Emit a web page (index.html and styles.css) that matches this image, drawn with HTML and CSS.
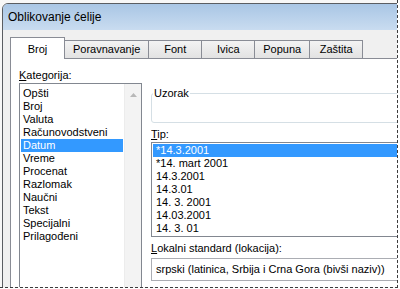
FILE: index.html
```html
<!DOCTYPE html>
<html lang="sr">
<head>
    <meta charset="UTF-8">
    <title>Oblikovanje ćelije</title>
    <link rel="stylesheet" href="styles.css">
</head>
<body>
    <div class="screen">
        <div class="window">
            <div class="titlebar">Oblikovanje ćelije</div>
            <div class="dialog">
                <div class="tabs">
                    <div class="tab active">Broj</div>
                    <div class="tab">Poravnavanje</div>
                    <div class="tab">Font</div>
                    <div class="tab">Ivica</div>
                    <div class="tab">Popuna</div>
                    <div class="tab">Zaštita</div>
                </div>
                <div class="panel">
                    <div class="col-left">
                        <div class="label"><u>K</u>ategorija:</div>
                        <div class="listbox">
                            <div class="items">
                                <div class="item">Opšti</div>
                                <div class="item">Broj</div>
                                <div class="item">Valuta</div>
                                <div class="item">Računovodstveni</div>
                                <div class="item selected">Datum</div>
                                <div class="item">Vreme</div>
                                <div class="item">Procenat</div>
                                <div class="item">Razlomak</div>
                                <div class="item">Naučni</div>
                                <div class="item">Tekst</div>
                                <div class="item">Specijalni</div>
                                <div class="item">Prilagođeni</div>
                            </div>
                            <div class="scrollbar">
                                <div class="arrow">
                                    <svg width="7" height="4" viewBox="0 0 7 4"><path d="M0 4 L3.5 0 L7 4 Z" fill="#b8b8b8"/></svg>
                                </div>
                            </div>
                        </div>
                    </div>
                    <div class="col-right">
                        <fieldset class="sample">
                            <legend>Uzorak</legend>
                        </fieldset>
                        <div class="label gap-top"><u>T</u>ip:</div>
                        <div class="typelist">
                            <div class="item selected">*14.3.2001</div>
                            <div class="item">*14. mart 2001</div>
                            <div class="item">14.3.2001</div>
                            <div class="item">14.3.01</div>
                            <div class="item">14. 3. 2001</div>
                            <div class="item">14.03.2001</div>
                            <div class="item">14. 3. 01</div>
                        </div>
                        <div class="label gap-top"><u>L</u>okalni standard (lokacija):</div>
                        <div class="combo">srpski (latinica, Srbija i Crna Gora (bivši naziv))</div>
                    </div>
                </div>
            </div>
        </div>
    </div>
</body>
</html>
```
FILE: styles.css
```css
* {
    box-sizing: border-box;
}
body {
    margin: 0;
    background-color: #fff;
    font-family: 'Liberation Sans', Arial, sans-serif;
    font-size: 11px;
    color: #000;
}
.screen {
    width: 398px;
    height: 288px;
    padding: 3px 0 0 2px;
    border-right: 1px dashed #3c3c3c;
    border-bottom: 1px dashed #3c3c3c;
    overflow: hidden;
    background-color: #f7f7f7;
}
.window {
    width: 430px;
    height: 320px;
    border: 1px solid #5a5d62;
    border-radius: 6px 6px 0 0;
    background-color: #f0f0f0;
    display: flex;
    flex-direction: column;
}
.titlebar {
    height: 26px;
    padding: 3px 0 0 5px;
    line-height: 20px;
    font-size: 12px;
    border-radius: 5px 5px 0 0;
    background: linear-gradient(#a9c6e5, #c9dcf0);
}
.dialog {
    padding: 7px 0 0 7px;
    flex: 1;
}
.tabs {
    display: flex;
    align-items: flex-end;
    height: 22px;
    margin-bottom: -1px;
    position: relative;
    z-index: 1;
}
.tab {
    height: 18px;
    min-width: 54px;
    margin-bottom: 1px;
    margin-left: -1px;
    padding: 0 8px;
    line-height: 17px;
    text-align: center;
    border: 1px solid #898c95;
    border-bottom: none;
    background: linear-gradient(#f3f3f3, #e2e2e2);
}
.tab.active {
    height: 22px;
    width: 55px;
    margin: 0;
    line-height: 22px;
    background: #fff;
}
.panel {
    display: flex;
    height: 240px;
    padding: 10px 0 0 8px;
    border: 1px solid #898c95;
    background-color: #fff;
}
.label {
    height: 13px;
    line-height: 13px;
}
.gap-top {
    margin-top: 5px;
}
.col-left {
    width: 123px;
}
.listbox {
    display: flex;
    height: 220px;
    margin-top: 1px;
    border: 1px solid #828790;
}
.items {
    flex: 1;
    padding-top: 3px;
}
.item {
    height: 13px;
    line-height: 13px;
    margin: 0 1px;
    padding-left: 2px;
    white-space: nowrap;
}
.item.selected {
    background-color: #3399ff;
    color: #fff;
}
.scrollbar {
    width: 17px;
    background-color: #f3f3f3;
    border-left: 1px solid #ececec;
}
.arrow {
    height: 17px;
    display: flex;
    align-items: center;
    justify-content: center;
    padding-top: 5px;
}
.col-right {
    width: 262px;
    margin-left: 9px;
}
.sample {
    height: 36px;
    margin: 18px 0 0;
    padding: 0;
    border: 1px solid #d5dfe5;
    border-radius: 3px;
}
.sample legend {
    padding: 0 1px;
    margin-left: 1px;
    line-height: 13px;
}
.typelist {
    margin-top: 1px;
    padding: 1px 0;
    border: 1px solid #828790;
}
.typelist .item {
    padding-left: 3px;
}
.combo {
    height: 23px;
    margin-top: 3px;
    padding-left: 4px;
    line-height: 21px;
    border: 1px solid #abadb3;
    white-space: nowrap;
}
```
